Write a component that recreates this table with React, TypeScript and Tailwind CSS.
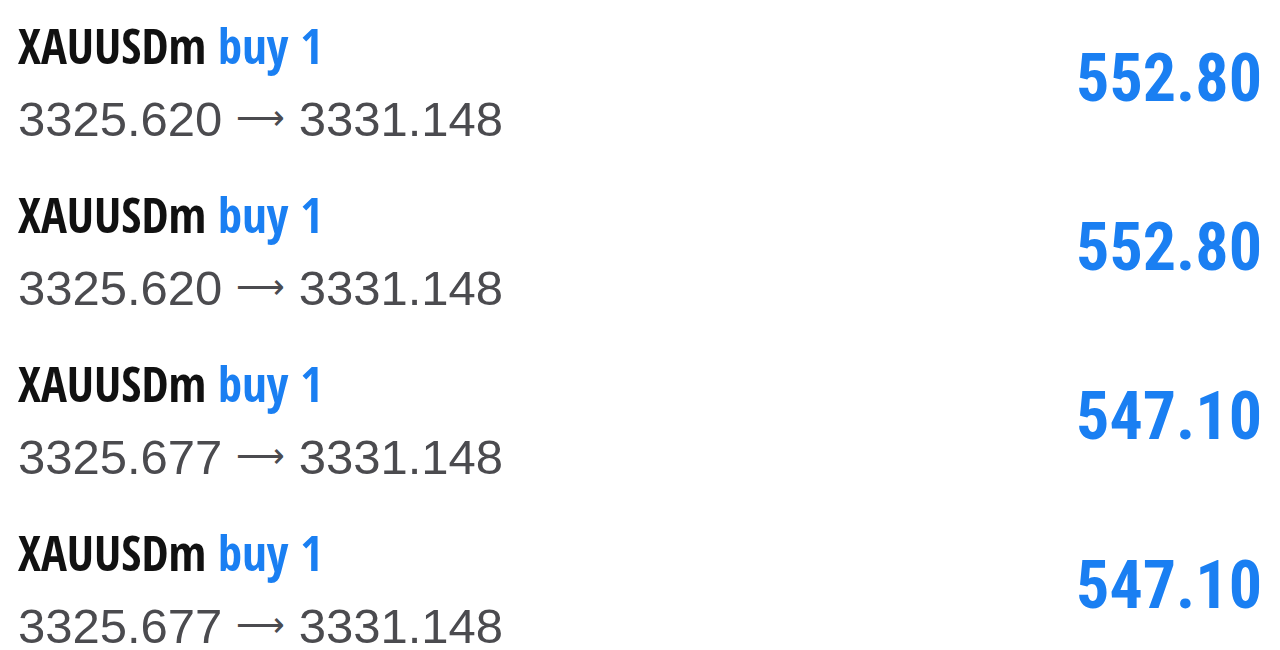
const trades = [
  { symbol: "XAUUSDm", side: "buy", volume: "1", open: "3325.620", close: "3331.148", profit: "552.80" },
  { symbol: "XAUUSDm", side: "buy", volume: "1", open: "3325.620", close: "3331.148", profit: "552.80" },
  { symbol: "XAUUSDm", side: "buy", volume: "1", open: "3325.677", close: "3331.148", profit: "547.10" },
  { symbol: "XAUUSDm", side: "buy", volume: "1", open: "3325.677", close: "3331.148", profit: "547.10" },
];

export default function App() {
  return (
    <div className="w-[1280px] h-[650px] overflow-hidden bg-white">
      {trades.map((t, i) => (
        <div key={i} className="flex h-[169px] items-start justify-between pl-[18px] pr-[18px] pt-[15px]">
          <div className="flex flex-col gap-[18px]">
            <div className="font-['Open_Sans_Condensed','Open_Sans',sans-serif] text-[48.5px] font-bold leading-[60px] text-[#111111]">
              {t.symbol} <span className="text-[#1a7ff2]">{t.side} {t.volume}</span>
            </div>
            <div className="font-['Liberation_Sans',Arial,sans-serif] text-[49px] leading-[48px] text-[#4b4b4f]">
              {t.open}{" "}
              <span className="align-[7px] font-['DejaVu_Sans',sans-serif] text-[34px] font-extralight">⟶</span>{" "}
              {t.close}
            </div>
          </div>
          <div className="mt-[31px] font-['Roboto_Condensed',Roboto,sans-serif] text-[66px] font-bold leading-[66px] text-[#1a7ff2]">
            {t.profit}
          </div>
        </div>
      ))}
    </div>
  );
}
